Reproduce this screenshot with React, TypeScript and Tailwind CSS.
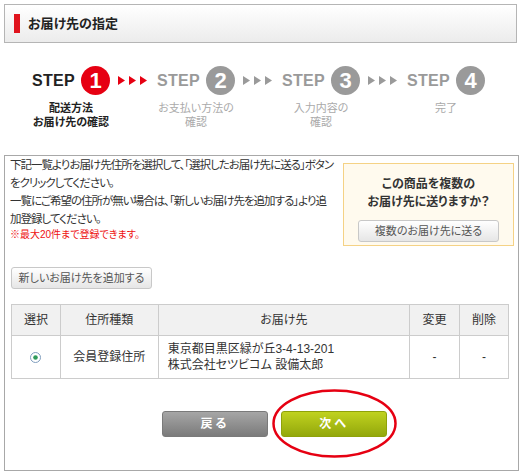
const steps = [
  { n: '1', label: ['配送方法', 'お届け先の確認'], active: true },
  { n: '2', label: ['お支払い方法の', '確認'], active: false },
  { n: '3', label: ['入力内容の', '確認'], active: false },
  { n: '4', label: ['完了'], active: false },
];

function Arrows({ active }: { active: boolean }) {
  const fill = active ? '#e60012' : '#9a9a9a';
  return (
    <div className="h-[29px] w-[29px] flex items-center">
      <svg width="29" height="9" viewBox="0 0 29 9">
        <polygon points="0,0 7,4.5 0,9" fill={fill} />
        <polygon points="11,0 18,4.5 11,9" fill={fill} />
        <polygon points="22,0 29,4.5 22,9" fill={fill} />
      </svg>
    </div>
  );
}

function Step({ n, label, active }: { n: string; label: string[]; active: boolean }) {
  return (
    <div className="w-[78px] flex flex-col items-center">
      <div className="flex items-center gap-[6px]">
        <span
          className={`text-[16px] font-bold tracking-[0.3px] ${active ? 'text-[#222]' : 'text-[#9a9a9a]'}`}
        >
          STEP
        </span>
        <span
          className={`w-[29px] h-[29px] rounded-full flex items-center justify-center text-white text-[22px] font-black leading-none ${
            active ? 'bg-[#e60012]' : 'bg-[#9a9a9a]'
          }`}
        >
          {n}
        </span>
      </div>
      <div
        className={`mt-[6px] text-[11px] leading-[14px] text-center whitespace-nowrap ${
          active ? 'text-[#222] font-bold' : 'text-[#aaa]'
        }`}
      >
        {label.map((l) => (
          <div key={l}>{l}</div>
        ))}
      </div>
    </div>
  );
}

function Radio() {
  return (
    <svg width="11" height="11" viewBox="0 0 11 11">
      <circle cx="5.5" cy="5.5" r="5" fill="#fff" stroke="#7f9dbd" />
      <circle cx="5.5" cy="5.5" r="2.3" fill="#2f9a5a" />
    </svg>
  );
}

export default function App() {
  return (
    <div className="w-[525px] h-[475px] bg-white overflow-hidden text-[#333] font-['Liberation_Sans','Noto_Sans_CJK_JP',sans-serif] [font-feature-settings:'palt']">
      {/* Title */}
      <div className="pt-[4px] pl-[4px]">
        <header className="w-[513px] h-[39px] border border-[#b5b5b5] bg-gradient-to-b from-white to-[#ececec] flex items-center pl-[9px]">
          <span className="w-[6px] h-[19px] bg-[#e0141e]" />
          <h1 className="ml-[8px] text-[13px] font-bold text-[#222]">お届け先の指定</h1>
        </header>
      </div>

      {/* Steps */}
      <div className="mt-[23px] pl-[32px] flex items-start h-[89px]">
        {steps.map((s, i) => (
          <div key={s.n} className="flex items-start">
            {i > 0 && (
              <div className="ml-[8px] mr-[10px]">
                <Arrows active={i === 1} />
              </div>
            )}
            <Step {...s} />
          </div>
        ))}
      </div>

      {/* Main */}
      <div className="ml-[4px] w-[515px] h-[316px] border border-[#a8a8a8] flex flex-col">
        <div className="flex">
          <div className="flex-1 min-w-0 pl-[5px] text-[11.5px] tracking-[-1px] leading-[18px] text-[#333] whitespace-nowrap">
            <p>下記一覧よりお届け先住所を選択して、「選択したお届け先に送る」ボタン</p>
            <p>をクリックしてください。</p>
            <p>一覧にご希望の住所が無い場合は、「新しいお届け先を追加する」より追</p>
            <p>加登録してください。</p>
            <p className="text-[10px] tracking-normal leading-[13px] text-[#ee1111]">※最大20件まで登録できます。</p>
          </div>
          <div className="shrink-0 mt-[7px] mr-[4px] w-[171px] h-[83px] bg-[#fffaee] border border-[#f5d285] flex flex-col items-center pt-[11px]">
            <p className="text-[12px] leading-[18px] font-bold text-[#333] text-center">
              この商品を複数の
              <br />
              お届け先に送りますか？
            </p>
            <button className="mt-[9px] w-[141px] h-[22px] rounded-[3px] border border-[#c8c8c8] bg-gradient-to-b from-white to-[#e6e6e6] text-[11px] text-[#555]">
              複数のお届け先に送る
            </button>
          </div>
        </div>

        <div className="mt-[19px] pl-[6px]">
          <button className="w-[141px] h-[22px] rounded-[3px] border border-[#c8c8c8] bg-gradient-to-b from-white to-[#e6e6e6] text-[11px] text-[#555]">
            新しいお届け先を追加する
          </button>
        </div>

        <table className="mt-[15px] ml-[6px] w-[498px] border-collapse text-[12px] text-[#333]">
          <thead>
            <tr className="h-[31px] bg-[#f1f1f1]">
              <th className="w-[49px] border border-[#cccccc] font-normal">選択</th>
              <th className="w-[98px] border border-[#cccccc] font-normal">住所種類</th>
              <th className="w-[252px] border border-[#cccccc] font-normal">お届け先</th>
              <th className="w-[50px] border border-[#cccccc] font-normal">変更</th>
              <th className="w-[49px] border border-[#cccccc] font-normal">削除</th>
            </tr>
          </thead>
          <tbody>
            <tr className="h-[43px]">
              <td className="border border-[#cccccc] text-center">
                <div className="flex justify-center">
                  <Radio />
                </div>
              </td>
              <td className="border border-[#cccccc] text-center">会員登録住所</td>
              <td className="border border-[#cccccc] pl-[9px] leading-[16px]">
                <div>東京都目黒区緑が丘3-4-13-201</div>
                <div>株式会社セツビコム 設備太郎</div>
              </td>
              <td className="border border-[#cccccc] text-center">-</td>
              <td className="border border-[#cccccc] text-center">-</td>
            </tr>
          </tbody>
        </table>

        <div className="mt-[32px] pl-[157px] flex gap-[13px]">
          <button className="w-[106px] h-[26px] rounded-[3px] border border-[#7a7a7a] bg-gradient-to-b from-[#a6a6a6] to-[#7b7b7b] text-white text-[12px] font-bold tracking-[3px]">
            戻る
          </button>
          <div className="relative">
            <button className="w-[106px] h-[26px] rounded-[3px] border border-[#8fa20a] bg-gradient-to-b from-[#c0d21f] to-[#93a80b] text-white text-[12px] font-bold tracking-[3px]">
              次へ
            </button>
            <svg
              className="absolute left-[-9px] top-[-22px] pointer-events-none"
              width="125"
              height="69"
              viewBox="0 0 125 69"
            >
              <ellipse cx="62.5" cy="34.5" rx="61" ry="33" fill="none" stroke="#e60012" strokeWidth="2.5" />
            </svg>
          </div>
        </div>
      </div>
    </div>
  );
}
